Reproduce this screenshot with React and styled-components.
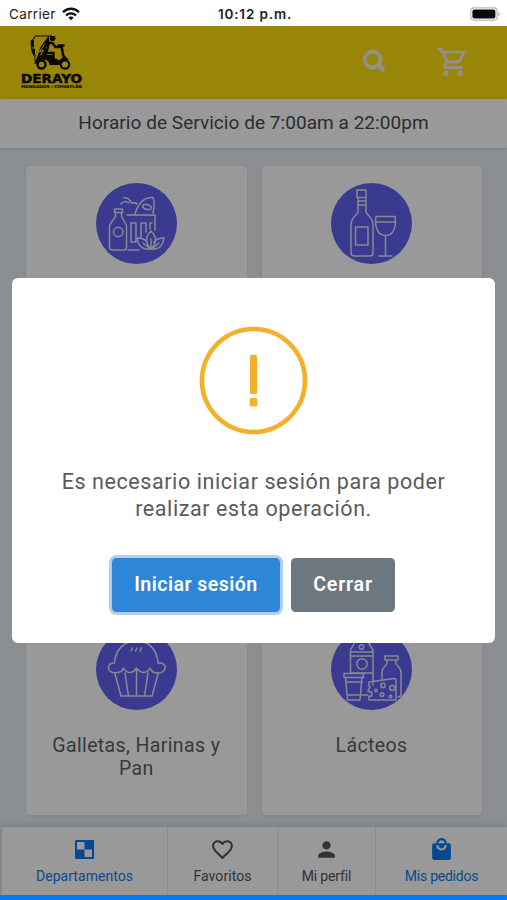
import React from 'react';
import styled, { createGlobalStyle } from 'styled-components';

const Global = createGlobalStyle`
  *{box-sizing:border-box}
  body{margin:0;background:#fff;font-family:Roboto,"Noto Sans",sans-serif;color:#5d6064}
`;
const Screen = styled.div`position:relative;width:507px;height:900px;overflow:hidden;display:flex;flex-direction:column;`;
const StatusBar = styled.div`
  flex:none;height:26px;display:grid;grid-template-columns:1fr auto 1fr;align-items:center;padding:1px 6px 0 9px;
  font-family:Inter,sans-serif;font-size:13.5px;color:#222;
`;
const Carrier = styled.div`display:flex;align-items:center;gap:6px;letter-spacing:.35px;`;
const Clock = styled.div`font-weight:600;letter-spacing:.86px;`;
const Battery = styled.div`justify-self:end;display:flex;`;

const Page = styled.div`position:relative;flex:none;height:869px;display:flex;flex-direction:column;background:#eaeff3;`;
const Header = styled.header`flex:none;height:72.5px;background:#ffde0d;display:flex;align-items:center;padding:0 37px 1px 20px;`;
const Brand = styled.div`display:flex;margin-right:auto;`;
const HeaderIcon = styled.div`display:flex;margin-left:${p => p.$gap || 0}px;`;
const Hours = styled.div`
  flex:none;height:49px;background:#fff;display:flex;align-items:center;justify-content:center;padding-bottom:1px;
  font-size:19px;letter-spacing:.05px;color:#484c51;box-shadow:0 1px 4px rgba(0,0,0,.14);
`;
const Grid = styled.main`
  flex:1;padding:18px 26px 0;display:grid;grid-template-columns:220.5px 220px;grid-auto-rows:203px;gap:20px 15px;align-content:start;
`;
const Card = styled.section`
  background:#fff;border-radius:4px;box-shadow:0 1px 5px rgba(0,0,0,.07);padding:17px 20px 0;
  display:flex;flex-direction:column;align-items:center;
`;
const Disc = styled.div`width:81px;height:81px;flex:none;border-radius:50%;background:#5f61f0;display:flex;overflow:hidden;`;
const Label = styled.div`margin-top:24px;font-size:19.5px;line-height:23px;letter-spacing:.38px;text-align:center;`;
const Tabs = styled.nav`
  flex:none;height:68px;display:grid;grid-template-columns:166px 110px 98px 1fr;background:#fff;
  border-left:2px solid #dfe3e8;box-shadow:0 -2px 7px rgba(0,0,0,.13);
`;
const Tab = styled.div`
  display:flex;flex-direction:column;align-items:center;padding-top:10px;
  border-right:${p => (p.$last ? 0 : 1)}px solid #e6e9ed;color:${p => (p.$active ? '#0a7bf0' : '#53545f')};
`;
const TabLabel = styled.span`font-size:14px;line-height:18px;margin-top:5px;letter-spacing:${p => p.$spacing}px;white-space:nowrap;`;
const BottomStrip = styled.div`height:5px;flex:none;background:#007dff;`;

const Overlay = styled.div`position:absolute;inset:0;background:rgba(0,0,0,.4);display:flex;justify-content:center;align-items:flex-start;padding-top:252px;`;
const Dialog = styled.div`
  width:483px;height:364.5px;background:#fff;border-radius:6px;display:flex;flex-direction:column;align-items:center;padding-top:48px;
`;
const Message = styled.p`margin:33px 0 0;font-size:21.5px;line-height:27px;letter-spacing:.58px;text-align:center;color:#5a5a5c;`;
const Actions = styled.div`display:flex;gap:11px;margin-top:36px;`;
const Button = styled.button`
  height:54px;width:${p => p.$width}px;border:0;border-radius:4.5px;padding:0 0 1px;
  background:${p => (p.$primary ? '#2e86d8' : '#6c777f')};color:#fff;
  box-shadow:${p => (p.$primary ? '0 0 0 3px #b3cdea' : 'none')};
  font:600 19.6px Roboto,sans-serif;letter-spacing:${p => p.$spacing}px;
`;

const Wifi = () => (
  <svg width="18" height="14" viewBox="0 0 18 14" fill="none" stroke="#111" strokeWidth="2.4">
    <path d="M1 5.2C5.4.6 12.6.6 17 5.2" /><path d="M4 8.5c2.8-2.8 7.2-2.8 10 0" />
    <path d="M6.3 10.4c1.5-1.3 3.9-1.3 5.4 0L9 13.3z" fill="#111" stroke="none" />
  </svg>
);
const BatteryIcon = () => (
  <svg width="31" height="14" viewBox="0 0 31 14">
    <rect x=".8" y=".8" width="26.4" height="12.4" rx="3.5" fill="#fff" stroke="#bbb" strokeWidth="1.2" />
    <rect x="2.4" y="2.4" width="23" height="9.2" rx="2" fill="#080808" /><path d="M28.5 4.7q2.6 2.3 0 4.6z" fill="#aaa" />
  </svg>
);
const WORDMARK = { fontFamily: '"DejaVu Sans",sans-serif', fontWeight: 700, lengthAdjust: 'spacingAndGlyphs' };
const Logo = () => (
  <svg width="64" height="54" viewBox="0 0 64 54" fill="none" stroke="#120e00" strokeLinecap="round" strokeLinejoin="round">
    <g transform="translate(9.500 0)">
      <path d="M6 1h16M6 1.500l-1.500.8.5 1-3 2v9l2 2v4l1.500-1 0 7" strokeWidth="1" />
      <path d="M2 5.500l2 0v7l-2-1.500zM3 14l2 0v5l-2-1z" fill="#120e00" />
      <path d="M19 1L11 12l-5 15 7-4 6-5-3-5 4-6z" fill="#120e00" stroke="none" />
      <path d="M15 9l-5 8 4-2-3 5" stroke="#ffde0d" strokeWidth="1" />
      <path d="M21 1h5l-1 1.500 1.500.5-2 3h-3l-1.500-2z" fill="#120e00" stroke="none" />
      <path d="M19 8h4l3 4h5M19 9l-2 9h7v7h3" strokeWidth="2.500" />
      <path d="M29 10.500h5M32 11l1.500 9 3 5" strokeWidth="2.500" />
      <path d="M12 20h11l3 5h4l5-4 5 4-4-1-6 6H20c0-6-9-7-11-2l-4 1c1-5 4-7 7-9z" fill="#120e00" stroke="none" />
      <circle cx="12" cy="29.500" r="4" strokeWidth="2.400" /><circle cx="35.500" cy="29.500" r="4.200" strokeWidth="2.200" />
    </g>
    <g fill="#120e00">
      <text x="1" y="47.500" fontSize="11.400" textLength="61" strokeWidth=".5" {...WORDMARK}>DERAYO</text>
      <text x="1" y="52.500" fontSize="3.900" textLength="61" strokeWidth=".15" {...WORDMARK}>MANDADOS - CIHUATLÁN</text>
    </g>
  </svg>
);
const Search = () => (
  <svg width="26" height="26" viewBox="0 0 26 26" fill="none" stroke="#f2f0ea">
    <circle cx="11.500" cy="10.500" r="7.900" strokeWidth="3.800" /><path d="M17 16l6 5.700" strokeWidth="5.200" />
  </svg>
);
const Cart = () => (
  <svg width="34" height="34" viewBox="0 0 24 24" fill="#f2f0ea">
    <path d="M15.55 13c.75 0 1.41-.41 1.75-1.03l3.58-6.49A.996.996 0 0 0 20.01 4H5.21l-.94-2H1v2h2l3.6 7.59-1.35 2.44C4.52 15.37 5.48 17 7 17h12v-2H7l1.1-2h7.45zM6.16 6h12.15l-2.76 5H8.53L6.16 6zM7 18c-1.1 0-1.99.9-1.99 2S5.9 22 7 22s2-.9 2-2-.9-2-2-2zm10 0c-1.1 0-1.99.9-1.99 2s.89 2 1.99 2 2-.9 2-2-.9-2-2-2z" />
  </svg>
);
const Art = ({ children }) => (
  <svg width="81" height="81" viewBox="0 0 81 81" fill="none" stroke="#e5e5f3" strokeWidth="1.5" strokeLinecap="round" strokeLinejoin="round">{children}</svg>
);
const Groceries = () => (
  <Art>
    <path d="M18.5 26h8v3.5h-8zM19.5 29.5v4l-5 7c-.8 1-1 2-1 3V64q0 3 3 3h12q2 0 2-3V43.5c0-1-.2-2-1-3l-4-7v-4" />
    <circle cx="22.2" cy="49" r="4.7" />
    <path d="M31 32c2-1 3 1 5 0s3 1 5 0 3 1 5 0 3 1 5 0 3 1 8 0v15M32 67h11" />
    <path d="M35 40h5v19h-5zM45 55V40h5v9M54 46v-6h2" />
    <path d="M39 31c3-10 9-17 18-16.500 2 5 1 11 0 16" /><ellipse cx="51" cy="24" rx="4.400" ry="2.400" transform="rotate(15 51 24)" />
    <path d="M25 21c2-3 5-3 8-1M28 15c3-1 5 1 7 4s4-1 6 2" />
    <path d="M55 66c-6-6-6-12 0-18 6 6 6 12 0 18zM54 66c-8 1-12-4-13-11 5 0 8 1 10 4M56 66c8 1 11-4 12-11-5 0-8 1-10 4M55 66V56M53 65l-6-5M57 65l6-5" />
  </Art>
);
const Wine = () => (
  <Art>
    <path d="M26 7h9v7.500h-9zM27 14.500v14c0 3-7 6-7 13V70q0 3 3 3h16q3 0 3-3V41.500c0-7-7-10-7-13v-14M27 18h8M27 22h8M24.500 44h12.500v18H24.500zM45 33.500h19c1.500 10-1 19-9.500 19S43.500 43 45 33.500zM45 39h19M54.500 52.500V72M48 73h13" />
  </Art>
);
const Muffin = () => (
  <Art>
    <path d="M18.500 34c1-13 9-22 22-22S61 21 62 34c10-1 9 10 0 10-4 0-7-2-8-5-3 6-9 6-13.500 0-4 6-10 6-13 0-2 6-15 7-15-.5 0-3 2-4.500 6-4.500zM19 45l6 22h31l6-22M29 44l3.500 23M40.500 41v26M52 44l-3.500 23M35 22l1.500-3M39.500 22l1.500-3M44 22l1.500-3" />
  </Art>
);
const Dairy = () => (
  <Art>
    <path d="M19.500 43V21l4.500-8h13l5 8v35M19.500 23H42M19.500 27H42M19.500 44H42" />
    <circle cx="30.500" cy="18" r="2.200" /><circle cx="31" cy="35" r="5.200" />
    <path d="M13 44.500h19.500v4H13zM14.500 48.500l2 22.500h12.500l2-22.500M15 53h15.500M16 66h13M31 66h6" />
    <path d="M54 27h13v4H54zM56 31v3c0 3-5 4-5 9v7M65 31v3c0 3 5 4 5 9v22q0 3-3 3" />
    <path d="M38 53l25-3.500q2 0 2 2V71H38v-3.500c4 0 4-5 0-5s4-5 0-5z" /><circle cx="52" cy="56.500" r="2.200" /><circle cx="61.300" cy="59" r="2.500" /><circle cx="51" cy="65.500" r="1.800" /><circle cx="45" cy="61.500" r="1.200" /><circle cx="59.500" cy="67.500" r="1.300" />
  </Art>
);
const Checker = () => (
  <svg width="25" height="25" viewBox="0 0 25 25"><rect x="3" y="3" width="19" height="19" rx="1" fill="currentColor" /><path d="M5 5h7.500v7.500H5zM12.500 12.500H20V20h-7.500z" fill="#fff" /></svg>
);
const Material = ({ d }) => <svg width="25" height="25" viewBox="0 0 24 24" fill="currentColor"><path d={d} /></svg>;
const HEART = 'M16.5 3c-1.740 0-3.410.810-4.500 2.090C10.910 3.810 9.240 3 7.500 3 4.420 3 2 5.420 2 8.500c0 3.780 3.400 6.860 8.550 11.540L12 21.350l1.450-1.320C18.600 15.360 22 12.280 22 8.500 22 5.420 19.580 3 16.500 3zm-4.400 15.550l-.1.1-.1-.1C7.140 14.240 4 11.390 4 8.500 4 6.500 5.500 5 7.500 5c1.540 0 3.040.990 3.570 2.360h1.870C13.460 5.990 14.960 5 16.500 5c2 0 3.500 1.500 3.500 3.500 0 2.890-3.140 5.740-7.900 10.050z';
const PERSON = 'M12 12c2.210 0 4-1.790 4-4s-1.790-4-4-4-4 1.790-4 4 1.790 4 4 4zm0 2c-2.670 0-8 1.340-8 4v2h16v-2c0-2.660-5.330-4-8-4z';
const BAG = 'M19 6h-2c0-2.760-2.240-5-5-5S7 3.240 7 6H5c-1.100 0-1.990.900-1.990 2L3 20c0 1.100.9 2 2 2h14c1.100 0 2-.900 2-2V8c0-1.100-.900-2-2-2zm-7-3c1.660 0 3 1.340 3 3H9c0-1.660 1.340-3 3-3zm0 10c-2.760 0-5-2.240-5-5h2c0 1.660 1.340 3 3 3s3-1.340 3-3h2c0 2.760-2.240 5-5 5z';
const Warning = () => (
  <svg width="109" height="109" viewBox="0 0 109 109" fill="none">
    <circle cx="54.500" cy="54.500" r="51.500" stroke="#f3b02b" strokeWidth="4.600" />
    <rect x="51" y="29" width="7" height="39" rx="1.500" fill="#f3b02b" /><rect x="50.700" y="72" width="7.600" height="8.500" rx="1.500" fill="#f3b02b" />
  </svg>
);

export default function App() {
  return (
    <Screen>
      <Global />
      <StatusBar>
        <Carrier>Carrier <Wifi /></Carrier><Clock>10:12 p.m.</Clock><Battery><BatteryIcon /></Battery>
      </StatusBar>
      <Page>
        <Header>
          <Brand><Logo /></Brand>
          <HeaderIcon><Search /></HeaderIcon><HeaderIcon $gap={49}><Cart /></HeaderIcon>
        </Header>
        <Hours>Horario de Servicio de 7:00am a 22:00pm</Hours>
        <Grid>
          <Card><Disc><Groceries /></Disc></Card>
          <Card><Disc><Wine /></Disc></Card>
          <Card /><Card />
          <Card><Disc><Muffin /></Disc><Label>Galletas, Harinas y Pan</Label></Card>
          <Card><Disc><Dairy /></Disc><Label>Lácteos</Label></Card>
        </Grid>
        <Tabs>
          <Tab $active><Checker /><TabLabel $spacing={0.04}>Departamentos</TabLabel></Tab>
          <Tab><Material d={HEART} /><TabLabel $spacing={0.06}>Favoritos</TabLabel></Tab>
          <Tab><Material d={PERSON} /><TabLabel $spacing={-0.14}>Mi perfil</TabLabel></Tab>
          <Tab $active $last><Material d={BAG} /><TabLabel $spacing={-0.25}>Mis pedidos</TabLabel></Tab>
        </Tabs>
        <Overlay>
          <Dialog role="dialog">
            <Warning />
            <Message>Es necesario iniciar sesión para poder<br />realizar esta operación.</Message>
            <Actions>
              <Button $primary $width={168} $spacing={0.45}>Iniciar sesión</Button>
              <Button $width={104} $spacing={0.8}>Cerrar</Button>
            </Actions>
          </Dialog>
        </Overlay>
      </Page>
      <BottomStrip />
    </Screen>
  );
}
